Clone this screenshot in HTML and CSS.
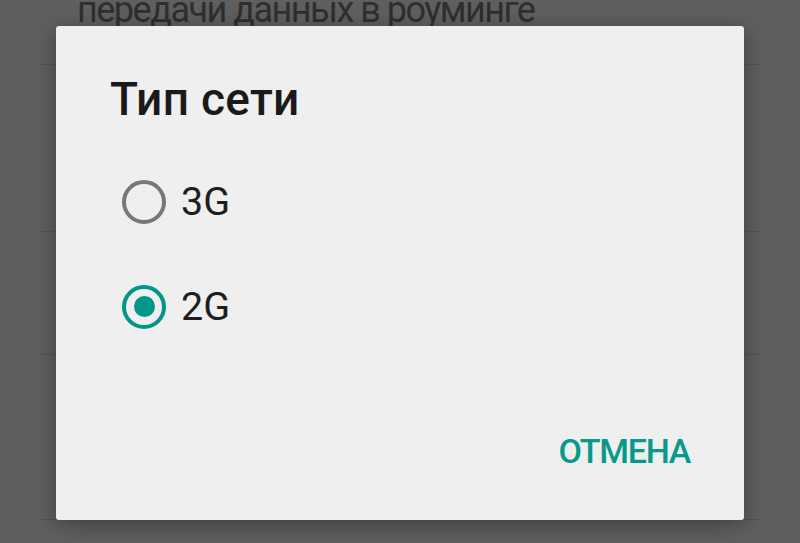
FILE: index.html
```html
<!DOCTYPE html>
<html lang="ru">
<head>
<meta charset="utf-8">
<title>Тип сети</title>
<link rel="stylesheet" href="styles.css">
</head>
<body>
<div class="screen">
  <ul class="settings">
    <li class="row row-first"><span class="row-text">передачи данных в роуминге</span></li>
    <li class="row row-2"></li>
    <li class="row row-3"></li>
    <li class="row row-4"></li>
  </ul>

  <div class="dialog" role="dialog">
    <h1 class="dialog-title">Тип сети</h1>
    <div class="options">
      <div class="option">
        <span class="radio"></span>
        <span class="option-label">3G</span>
      </div>
      <div class="option">
        <span class="radio radio-checked"><span class="radio-dot"></span></span>
        <span class="option-label">2G</span>
      </div>
    </div>
    <div class="actions">
      <span class="action">ОТМЕНА</span>
    </div>
  </div>
</div>
</body>
</html>
```
FILE: styles.css
```css
html, body {
  margin: 0;
  padding: 0;
}
body {
  background: #5f5f5f;
  font-family: Roboto, "Noto Sans", sans-serif;
  width: 800px;
  height: 543px;
  overflow: hidden;
}
.screen {
  position: relative;
  width: 800px;
  height: 543px;
  overflow: hidden;
}
.settings {
  list-style: none;
  margin: 0;
  padding: 0 40px;
}
.row {
  border-bottom: 1px solid #545454;
  box-sizing: border-box;
}
.row-first {
  height: 65px;
  padding-left: 37px;
  display: flex;
  align-items: flex-end;
  padding-bottom: 36px;
}
.row-text {
  font-size: 36px;
  line-height: 36px;
  color: #2f2f2f;
  letter-spacing: -1.5px;
  white-space: nowrap;
}
.row-2 { height: 167px; }
.row-3 { height: 123px; }
.row-4 { height: 165px; }

.dialog {
  position: absolute;
  left: 56px;
  top: 26px;
  width: 688px;
  height: 494px;
  box-sizing: border-box;
  background: #efefef;
  border-radius: 3px;
  box-shadow: 0 4px 22px rgba(0, 0, 0, 0.35);
  display: flex;
  flex-direction: column;
  padding: 50px 54px 52px 54px;
}
.dialog-title {
  margin: 0;
  font-size: 46px;
  line-height: 46px;
  font-weight: 500;
  color: #1a1a1a;
  letter-spacing: 0.3px;
}
.options {
  margin-top: 27px;
  display: flex;
  flex-direction: column;
}
.option {
  height: 105px;
  display: flex;
  align-items: center;
  padding-left: 12px;
}
.radio {
  width: 44px;
  height: 44px;
  box-sizing: border-box;
  border: 4px solid #777777;
  border-radius: 50%;
  display: flex;
  align-items: center;
  justify-content: center;
  flex: none;
}
.radio-checked {
  border-color: #019788;
}
.radio-dot {
  width: 21px;
  height: 21px;
  border-radius: 50%;
  background: #019788;
}
.option-label {
  margin-left: 15px;
  font-size: 39.5px;
  line-height: 40px;
  color: #1e1e1e;
}
.actions {
  margin-top: auto;
  display: flex;
  justify-content: flex-end;
}
.action {
  font-size: 34px;
  line-height: 34px;
  font-weight: 500;
  color: #079a8b;
  letter-spacing: -1.3px;
}
```
